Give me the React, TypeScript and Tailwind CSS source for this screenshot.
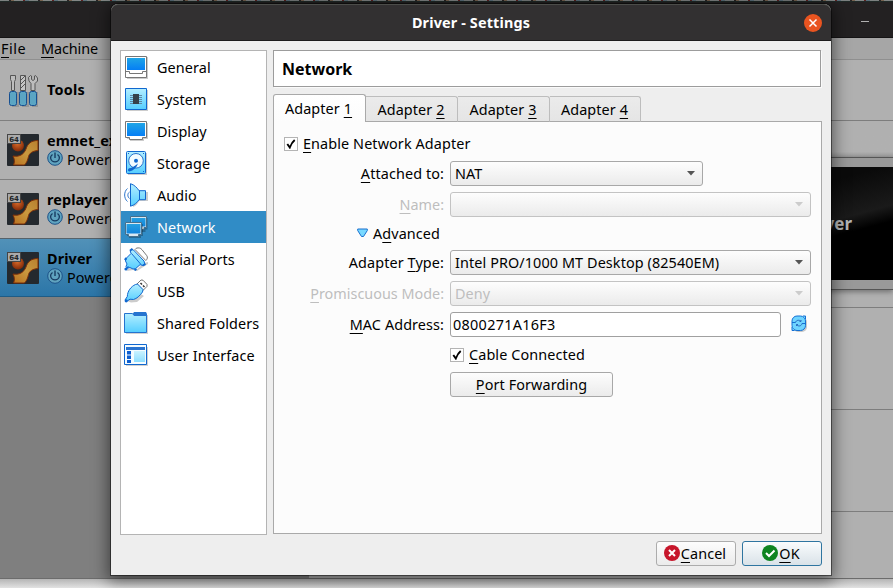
import type { ReactNode } from "react";

const SHADOW = "#000000";

function Key({ children }: { children: ReactNode }) {
  return <span className="underline decoration-1 underline-offset-[3px] [text-decoration-skip-ink:none]">{children}</span>;
}

function Defs() {
  return (
    <svg className="absolute h-0 w-0" aria-hidden="true">
      <defs>
        <linearGradient id="screen" x1="0" y1="0" x2="0" y2="1">
          <stop offset="0" stopColor="#1fa5e6" />
          <stop offset="1" stopColor="#057ef5" />
        </linearGradient>
        <linearGradient id="netscreen" x1="0" y1="0" x2="0" y2="1">
          <stop offset="0" stopColor="#26a0e0" />
          <stop offset="1" stopColor="#0f84dd" />
        </linearGradient>
        <linearGradient id="cyan" x1="0" y1="0" x2="0" y2="1">
          <stop offset="0" stopColor="#b4eeff" />
          <stop offset="1" stopColor="#55ceff" />
        </linearGradient>
        <linearGradient id="gold" x1="0" y1="1" x2="1" y2="0">
          <stop offset="0" stopColor="#b8701f" />
          <stop offset="0.5" stopColor="#c9993f" />
          <stop offset="1" stopColor="#b87f2e" />
        </linearGradient>
        <radialGradient id="ball" cx="0.45" cy="0.35" r="0.7">
          <stop offset="0" stopColor="#d86a2a" />
          <stop offset="1" stopColor="#7a2405" />
        </radialGradient>
      </defs>
    </svg>
  );
}

function Icon({ children }: { children: ReactNode }) {
  return (
    <svg width="24" height="24" viewBox="0 0 24 24" className="shrink-0">
      {children}
    </svg>
  );
}

const GeneralIcon = () => (
  <Icon>
    <path d="M3 2h21v22H3z" fill={SHADOW} opacity="0.2" />
    <path d="M1.5 1.5h21v21h-21z" fill="#fff" stroke="#777" />
    <path d="M3 3h18v12H3z" fill="url(#screen)" />
    <path d="M1.5 16.5h4v2h13v-2h4" fill="none" stroke="#777" />
  </Icon>
);

const SystemIcon = () => (
  <Icon>
    <path d="M3 3h21v21H3z" fill={SHADOW} opacity="0.2" />
    <path d="M1.5 1.5h21v21h-21z" fill="url(#cyan)" stroke="#1067cf" />
    <path d="M6 8.500h12M6 10.500h12M6 12.500h12M6 14.500h12M6 16.500h12" stroke="#5c7f9c" strokeWidth="0.9" />
    <path d="M9 7h6v10H9z" fill="#36414a" />
  </Icon>
);

const DisplayIcon = () => (
  <Icon>
    <path d="M3 4h21v16h-4v2H6v-2H3z" fill={SHADOW} opacity="0.2" />
    <path d="M1.500 2.500h21v16h-4v2h-13v-2h-4z" fill="#fff" stroke="#777" />
    <path d="M3 4h18v13H3z" fill="url(#screen)" />
  </Icon>
);

const StorageIcon = () => (
  <Icon>
    <path d="M4 2h19v22H4z" fill={SHADOW} opacity="0.2" />
    <rect x="2.500" y="0.500" width="19" height="22" rx="1" fill="url(#cyan)" stroke="#1067cf" />
    <circle cx="12" cy="9.800" r="7.300" fill="#f2fbff" stroke="#2b74cc" />
    <circle cx="12" cy="9.800" r="2" fill="#1067cf" />
    <path d="M14 12.500c-1.500 4.500-4.500 7-8.500 8-2-.2-2-2.200-.5-3.200 2 .2 5-1.800 9-4.800z" fill="#1067cf" />
    <path d="M4 2.500h1M19 2.500h1M19 20.500h1" stroke="#1067cf" />
  </Icon>
);

const AudioIcon = () => (
  <Icon>
    <path d="M7 3c3 1 5 4 6 6h11v9H15c-1 2-3 5-6 6z" fill={SHADOW} opacity="0.2" />
    <path d="M6.500 .7c3.800 1 7 4.500 8.500 7h6.500v9H15c-1.500 2.500-4.500 5.500-8.500 6.500z" fill="url(#cyan)" stroke="#1067cf" strokeLinejoin="round" />
    <path d="M15.500 7.500v9.500" stroke="#1067cf" fill="none" />
    <path d="M3.500 5.500c-3.800 3-3.800 10 0 13M5.500 9c-2.200 1.500-2.200 4.800 0 6.500" stroke="#2b74cc" fill="none" />
  </Icon>
);

const NetworkIcon = () => (
  <Icon>
    <path d="M8 3h15.500v11.500h-2V17H8z" fill={SHADOW} opacity="0.25" />
    <path d="M6.500 1.500h16v11h-2.500v2h-13.500z" fill="#d8e8f2" stroke="#47708c" />
    <path d="M7.500 3h14v8.500h-14z" fill="url(#netscreen)" />
    <path d="M3 9h16v12h-2v2H5v-2H3z" fill={SHADOW} opacity="0.25" />
    <path d="M1.500 7.500h16v12h-3v2h-10v-2h-3z" fill="#d8e8f2" stroke="#47708c" />
    <path d="M2.500 9h14v9.500h-14z" fill="url(#netscreen)" />
  </Icon>
);

const SerialIcon = () => (
  <Icon>
    <path d="M4 22l3-1 5 2 8-7 4-1v2l-11 7-4-1-6 1z" fill={SHADOW} opacity="0.2" />
    <path d="M11 2.500c1-1.500 2.500-1.800 4.500-1.500 1 .2 1.800.8 2.500 1.700l4.800 6c1 1.500.8 3.300-1 4.800z" fill="#fff" stroke="#777" />
    <path d="M7.500 2.500l2 .5L20 14l.8 3-1.800 1.500-3-.8-4.500 4-2.500.3-3-1.500-2.500.7-1.500-1.700 1-2.500-1.500-3L2 11.500l5-5-.8-2.700z" fill="url(#cyan)" stroke="#1067cf" strokeLinejoin="round" />
    <path d="M7.500 6.500L17 17.500" stroke="#1067cf" fill="none" />
    <path d="M.8 13l1.700-2M12.500 22l-2 1.300M6 3.800l2.500-2M19 18.500l2.500-1.500" stroke="#1067cf" strokeWidth="2" fill="none" />
    <circle cx="2" cy="22" r="1.600" fill="#1067cf" />
    <path d="M2 22l2.500-2.500" stroke="#1067cf" strokeWidth="1.500" />
  </Icon>
);

const UsbIcon = () => (
  <Icon>
    <path d="M3 22l3-3 5-8 9 6-7 6-6 .5z" fill={SHADOW} opacity="0.2" />
    <path d="M13 5l4-4 2 .2 4 4.200v2l-4 4z" fill="#fff" stroke="#777" />
    <path d="M16.500 4l1.500 1.500M19 6.500l1.500 1.500" stroke="#333" strokeWidth="1.500" />
    <path d="M11.500 5.500l2-.5 5.500 5.500-.5 2.500c-3 4-5.500 6.500-9 7.500l-3.500-.3-3.500 2.300-1.500-1.500L3.300 17.500C3.500 12 7 7.500 11.500 5.500z" fill="url(#cyan)" stroke="#1067cf" strokeLinejoin="round" />
    <circle cx="2.200" cy="21.800" r="1.600" fill="#1067cf" />
  </Icon>
);

const FoldersIcon = () => (
  <Icon>
    <path d="M2 4h22v19H2z" fill={SHADOW} opacity="0.18" />
    <path d="M8 4l2-3h12l1 2v2H9z" fill="#2674cf" />
    <path d="M.5 2.500h8l1.500 2h12.500v17H.5z" fill="url(#cyan)" stroke="#2573cf" />
  </Icon>
);

const InterfaceIcon = () => (
  <Icon>
    <path d="M2 4h22v19H2z" fill={SHADOW} opacity="0.18" />
    <path d="M.5 1.500h22v20H.5z" fill="#f4fcff" stroke="#1067cf" />
    <path d="M2 4h19v3H2z" fill="#2a74d0" />
    <path d="M3 8h4v3.500H3zM3 12.500h4V16H3zM3 17h4v3H3z" fill="#0d5ed0" />
    <path d="M10 8h11v11H10z" fill="url(#cyan)" opacity="0.65" />
  </Icon>
);

const categories = [
  { name: "General", Art: GeneralIcon },
  { name: "System", Art: SystemIcon },
  { name: "Display", Art: DisplayIcon },
  { name: "Storage", Art: StorageIcon },
  { name: "Audio", Art: AudioIcon },
  { name: "Network", Art: NetworkIcon },
  { name: "Serial Ports", Art: SerialIcon },
  { name: "USB", Art: UsbIcon },
  { name: "Shared Folders", Art: FoldersIcon },
  { name: "User Interface", Art: InterfaceIcon },
];

function PowerIcon() {
  return (
    <svg width="16" height="16" viewBox="0 0 16 16" className="mb-[3px] shrink-0">
      <circle cx="8" cy="8" r="7.300" fill="#5fa3bf" stroke="#1d5288" />
      <path d="M5.500 4.500c-3.500 2.500-1.800 7.300 2.500 7.300s6-4.800 2.500-7.300" fill="none" stroke="#173b60" strokeWidth="1.200" />
      <path d="M8 2.500v5.500" stroke="#173b60" strokeWidth="1.400" />
    </svg>
  );
}

function MachineIcon() {
  return (
    <svg width="32" height="32" viewBox="0 0 32 32" className="shrink-0">
      <rect width="32" height="32" rx="1" fill="#24292e" />
      <circle cx="11" cy="11.500" r="6" fill="url(#ball)" />
      <path d="M31 6.500v10c-5.500.5-8.500 2.500-9.500 6C20.800 26 19.500 29 17.500 31H6.500c1.200-2.500 1.300-5.500-.5-9 6 1 10.500-1 13-7 1.500-5 5-8.500 12-8.500z" fill="url(#gold)" stroke="#7d2f08" strokeWidth="1" />
      <rect x="0.500" y="0.500" width="13" height="9" fill="#aaa" stroke="#454545" />
      <text x="7" y="7.600" fontSize="7" fontWeight="700" fontFamily="DejaVu Sans, sans-serif" letterSpacing="0" textAnchor="middle" fill="#202326">64</text>
    </svg>
  );
}

function ToolsIcon() {
  return (
    <svg width="32" height="33" viewBox="0 0 32 33" className="shrink-0">
      <path d="M4 18h7v15H4zM14 18h7v15h-7zM24 18h6v15h-6z" fill="#000" opacity="0.15" />
      <path d="M2.500 1.500h5v4l-1 2v9h-3v-9l-1-2z" fill="#bdbdbd" stroke="#555" />
      <path d="M12.500 1.500h5v15h-5z" fill="#c4c4c4" stroke="#555" />
      <path d="M13 6l4-4M13 10l4-4M13 14l4-4" stroke="#555" />
      <path d="M22.500 1.500l-2 2 .5 3.500 2 2.500v7h4v-7l2.500-2.500V4l-2-2.500-1 .5v3.500l-1.500 1-1.500-1V2z" fill="#bdbdbd" stroke="#555" />
      <rect x="1.500" y="17.500" width="7" height="14" rx="2" fill="#5ba5c3" stroke="#164f91" />
      <rect x="11.500" y="17.500" width="7" height="14" rx="2" fill="#5ba5c3" stroke="#164f91" />
      <rect x="21.500" y="17.500" width="7" height="14" rx="2" fill="#5ba5c3" stroke="#164f91" />
    </svg>
  );
}

const machines = [
  { name: "emnet_exp", box: "h-[59px] border-b border-[#7f7f7f]" },
  { name: "replayer", box: "h-[59px] border-b border-[#55626b]" },
  { name: "Driver", box: "h-[58px] border-b border-[#1f5c86] bg-linear-to-b from-[#5191b8] to-[#2b76a8]" },
];

function Manager() {
  return (
    <div className="flex h-full flex-col">
      <div className="h-px bg-[repeating-linear-gradient(90deg,#7c8180_0_9px,#292425_9px_11px,#77634f_11px_14px,#838786_14px_23px,#5e2222_23px_25px,#5b707c_25px_29px)]" />
      <div className="flex h-[37px] items-start justify-end border-t border-b border-t-[#202a28] border-b-[#151415] bg-[#232122] pt-[19px] pr-[24px]">
        <div className="h-px w-2 bg-[#b0b0b0]" />
      </div>
      <div className="flex h-[22px] items-center gap-[15px] border-b border-[#8f8f8f] bg-[#a6a6a6] pl-[1px]">
        <span className="tracking-[0.5px]"><Key>F</Key>ile</span>
        <span className="tracking-[-0.1px]"><Key>M</Key>achine</span>
      </div>
      <div className="flex h-[519px] border-b border-[#6c6c6c] bg-[#b0b0b0]">
        <div className="flex w-[309px] flex-col bg-[#7f7f7f]">
          <div className="flex h-[61px] items-center gap-[7px] border-b border-[#7f7f7f] bg-[#b0b0b0] pl-[8px]">
            <ToolsIcon />
            <span className="font-bold tracking-[0.25px]">Tools</span>
          </div>
          {machines.map((m) => (
            <div key={m.name} className={`flex items-center gap-[8px] bg-[#b0b0b0] pl-[7px] ${m.box}`}>
              <MachineIcon />
              <div className="flex flex-col">
                <span className="h-[19px] font-bold leading-[19px]">{m.name}</span>
                <span className="flex h-[19px] items-center gap-[4px] leading-[19px]">
                  <PowerIcon />
                  Powered Off
                </span>
              </div>
            </div>
          ))}
        </div>
        <div className="flex grow flex-col">
          <div className="h-[61px] shrink-0 border-b border-[#7d7d7d]" />
          <div className="h-[36px] shrink-0 bg-linear-to-b from-[#b0b0b0] from-85% to-[#999]" />
          <div className="flex h-[133px] shrink-0 flex-col border-t border-b border-[#555] bg-[#999] pt-[9px] pb-[9px] shadow-[0_2px_5px_rgba(0,0,0,0.35)]">
            <div className="flex grow items-center justify-end bg-[linear-gradient(165deg,#0a0a0a_57%,#1a1a1a_72%,#000_78%)] pr-[41px]">
              <span className="text-[17px] font-bold tracking-[0px] text-[#b5b5b5]">Driver</span>
            </div>
          </div>
          <div className="h-[18px] shrink-0 border-b border-[#7d7d7d]" />
          <div className="h-[102px] shrink-0 border-b border-[#7d7d7d]" />
          <div className="h-[102px] shrink-0 border-b border-[#7d7d7d]" />
        </div>
      </div>
      <div className="grow bg-linear-to-b from-[#b5b5b5] to-[#e2e2e2]" />
    </div>
  );
}

function Check() {
  return (
    <span className="flex h-[14px] w-[14px] shrink-0 items-center justify-center border border-[#b4b4b4] bg-white">
      <svg width="10" height="10" viewBox="0 0 10 10">
        <path d="M1.300 5l2.500 3.500C5 5.500 6.200 3 8.700 1" fill="none" stroke="#000" strokeWidth="1.900" />
      </svg>
    </span>
  );
}

function Select({ text, width, disabled }: { text: string; width: string; disabled?: boolean }) {
  const tone = disabled ? "border-[#c3c3c3] text-[#bebebe]" : "border-[#a8a8a8] text-black";
  return (
    <div className={`flex h-[25px] items-center justify-between rounded-[3px] border bg-linear-to-b from-[#fdfdfd] to-[#ebebeb] pr-[7px] pl-[4px] ${width} ${tone}`}>
      <span>{text}</span>
      <svg width="8" height="5" viewBox="0 0 8 5">
        <path d="M0 0h8L4 4.500z" fill={disabled ? "#cccccc" : "#555555"} />
      </svg>
    </div>
  );
}

function Row({ label, disabled, children }: { label: ReactNode; disabled?: boolean; children: ReactNode }) {
  return (
    <div className="flex h-[25px] items-center gap-[6px]">
      <div className={`w-[170px] text-right ${disabled ? "tracking-[0px] text-[#bebebe]" : ""}`}>{label}</div>
      {children}
    </div>
  );
}

function RefreshIcon() {
  return (
    <svg width="16" height="17" viewBox="0 0 16 17" className="mb-[2px] ml-[4px]">
      <rect x="2" y="2" width="14" height="15" rx="5" fill="#000" opacity="0.2" />
      <rect x="1" y="1" width="13.500" height="14.500" rx="5" fill="#6fd4ff" stroke="#1370d4" />
      <path d="M12 1h2.500v3M1 12v3.500h2.500" fill="#6fd4ff" stroke="#1370d4" />
      <path d="M1 7.500h3.500M11 8.500h3.500" stroke="#1370d4" strokeWidth="1.200" />
      <path d="M4.500 7.500C5 5 8.500 4.500 10 6.500v-1.500M10 6.500H8.500M11 8.500c-.5 2.800-4 3.300-5.500 1v1.500M5.500 9.500H7" fill="none" stroke="#2a6cc0" />
    </svg>
  );
}

function NetworkForm() {
  return (
    <div className="flex grow flex-col gap-[6px] border border-t-0 border-[#a9a9a9] bg-[#fcfcfc] pt-[11px]">
      <div className="mb-px flex h-[21px] items-center gap-[5px] pl-[10px]">
        <Check />
        <span><Key>E</Key>nable Network Adapter</span>
      </div>
      <Row label={<><Key>A</Key>ttached to:</>}>
        <Select text="NAT" width="w-[253px]" />
      </Row>
      <Row label={<><Key>N</Key>ame:</>} disabled>
        <Select text="" width="w-[361px]" disabled />
      </Row>
      <div className="flex h-[21px] items-center gap-[5px] pl-[83px]">
        <svg width="11" height="10" viewBox="0 0 11 10" className="mb-[2px]">
          <path d="M.7 1h9.600v1.500L6.500 8.500h-2L.7 2.500z" fill="#79d9ff" stroke="#1b70cf" />
        </svg>
        <span>A<Key>d</Key>vanced</span>
      </div>
      <Row label={<>Adapter <Key>T</Key>ype:</>}>
        <Select text="Intel PRO/1000 MT Desktop (82540EM)" width="w-[361px]" />
      </Row>
      <Row label={<><Key>P</Key>romiscuous Mode:</>} disabled>
        <Select text="Deny" width="w-[361px]" disabled />
      </Row>
      <Row label={<><Key>M</Key>AC Address:</>}>
        <div className="flex h-[25px] w-[331px] items-center rounded-[3px] border border-[#a0a0a0] bg-white pl-[2px] tracking-[0.3px]">0800271A16F3</div>
        <RefreshIcon />
      </Row>
      <div className="flex h-[23px] items-center gap-[5px] pl-[176px]">
        <Check />
        <span><Key>C</Key>able Connected</span>
      </div>
      <div className="pl-[176px]">
        <div className="flex h-[25px] w-[163px] items-center justify-center rounded-[3px] border border-[#a8a8a8] bg-linear-to-b from-[#fdfdfd] to-[#ebebeb]">
          <span><Key>P</Key>ort Forwarding</span>
        </div>
      </div>
    </div>
  );
}

const idleTabs = [
  { n: "2", width: "w-[92px]" },
  { n: "3", width: "w-[92px]" },
  { n: "4", width: "w-[91px]" },
];

function Settings() {
  return (
    <div className="absolute top-[4px] left-[111px] flex h-[571px] w-[720px] flex-col rounded-t-[7px] bg-[#eeeeee] shadow-[0_0_0_1px_rgba(0,0,0,0.45),0_3px_16px_3px_rgba(0,0,0,0.5)]">
      <div className="flex h-[37px] shrink-0 items-center rounded-t-[7px] border-t border-b border-t-[#4b4c49] border-b-[#1c1b1c] bg-[#323031] pr-[9px]">
        <div className="grow pl-[27px] text-center font-bold tracking-[0.15px] text-white">Driver - Settings</div>
        <svg width="18" height="18" viewBox="0 0 18 18">
          <circle cx="9" cy="9" r="9" fill="#e95420" />
          <path d="M5.500 5.500l7 7m0-7l-7 7" stroke="#fff" strokeWidth="1.500" />
        </svg>
      </div>
      <div className="flex h-[493px] gap-[6px] pt-[9px] pl-[9px]">
        <div className="h-[485px] w-[147px] border border-[#b4b4b4] bg-white">
          {categories.map(({ name, Art }) => (
            <div key={name} className={`flex h-8 items-center gap-[9px] pl-[3px] ${name === "Network" ? "bg-[#308cc6] text-white" : ""}`}>
              <Art />
              <span className="pt-[2px]">{name}</span>
            </div>
          ))}
        </div>
        <div className="flex h-[484px] w-[549px] flex-col">
          <div className="flex h-[37px] w-[548px] shrink-0 items-center border border-[#9c9c9c] bg-white pl-[8px] text-[16px] font-bold tracking-[0px] shadow-[1px_1px_0_#fafafa]">
            Network
          </div>
          <div className="mt-[7px] flex h-[28px] shrink-0 items-end">
            <div className="flex h-[28px] w-[93px] items-center justify-center rounded-t-[3px] border border-b-0 border-[#a9a9a9] bg-linear-to-b from-white to-[#fcfcfc] pr-[2px]">
              <span>Adapter <Key>1</Key></span>
            </div>
            {idleTabs.map(({ n, width }) => (
              <div key={n} className={`flex h-[26px] items-center justify-center rounded-tr-[3px] border border-l-0 border-[#bdbdbd] border-b-[#a9a9a9] bg-linear-to-b from-[#ebebeb] to-[#e5e5e5] pt-[2px] pr-px ${width}`}>
                <span>Adapter <Key>{n}</Key></span>
              </div>
            ))}
            <div className="h-[26px] grow border-b border-[#a9a9a9]" />
          </div>
          <NetworkForm />
        </div>
      </div>
      <div className="flex justify-end gap-[6px] pt-[7px] pr-[9px]">
        <div className="flex h-[25px] w-[80px] items-center justify-center rounded-[3px] border border-[#acacac] bg-linear-to-b from-[#fdfdfd] to-[#ebebeb] pr-[2px]">
          <svg width="16" height="16" viewBox="0 0 16 16" className="mr-px mb-px">
            <circle cx="8" cy="8" r="8" fill="#c7162b" />
            <path d="M5 5l6 6m0-6l-6 6" stroke="#fff" strokeWidth="2" />
          </svg>
          <span><Key>C</Key>ancel</span>
        </div>
        <div className="flex h-[25px] w-[80px] items-center justify-center rounded-[3px] border border-[#2f75a0] bg-linear-to-b from-[#fafcfd] to-[#d9e2e8] pr-[2px]">
          <svg width="16" height="16" viewBox="0 0 16 16" className="mr-px mb-px">
            <circle cx="8" cy="8" r="8" fill="#0e8420" />
            <path d="M4 8l3 3 5.500-5.500" stroke="#fff" strokeWidth="2" fill="none" />
          </svg>
          <span><Key>O</Key>K</span>
        </div>
      </div>
    </div>
  );
}

export default function App() {
  return (
    <div className="relative h-[588px] w-[893px] overflow-hidden font-['Noto_Sans',sans-serif] text-[14.4px] leading-[20px] tracking-[0.1px] whitespace-nowrap text-black">
      <Defs />
      <Manager />
      <Settings />
    </div>
  );
}
